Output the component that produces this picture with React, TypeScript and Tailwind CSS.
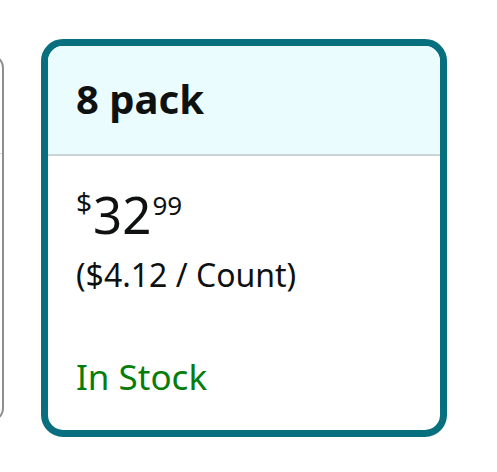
const font = { fontFamily: '"Noto Sans", "Open Sans", sans-serif' }

export default function App() {
  return (
    <div className="w-[497px] h-[472px] bg-white overflow-hidden" style={font}>
      <div className="flex items-center pt-[39px]">
        {/* previous option, cut off at the left edge */}
        <div className="shrink-0 w-[300px] h-[368px] -ml-[296px] border-2 border-[#8d9090] rounded-[14px] bg-white flex flex-col">
          <div className="h-[98px] border-b border-[#d5d9d9]"></div>
        </div>

        {/* selected option */}
        <div className="shrink-0 ml-[37px] w-[406px] h-[398px] border-[7px] border-[#086f7f] rounded-[22px] overflow-hidden flex flex-col bg-white">
          <div className="h-[110px] bg-[#ebfcff] flex items-center px-[28px] border-b-2 border-[#cbd5d6]">
            <p className="text-[40px] font-bold text-[#0f1111] leading-none mt-[-2px]">8 pack</p>
          </div>
          <div className="flex flex-col px-[28px] pt-[33px]">
            <div className="flex items-start text-[#0f1111] leading-none">
              <span className="text-[28px] mt-[-1px] mr-[1px]">$</span>
              <span className="text-[51px]">32</span>
              <span className="text-[26px] mt-[3px] ml-[1px]">99</span>
            </div>
            <p className="text-[#0f1111] text-[32px] leading-none mt-[19px]">($4.12 / Count)</p>
            <p className="text-[#067d0a] text-[35px] leading-none mt-[68px]">In Stock</p>
          </div>
        </div>
      </div>
    </div>
  )
}
